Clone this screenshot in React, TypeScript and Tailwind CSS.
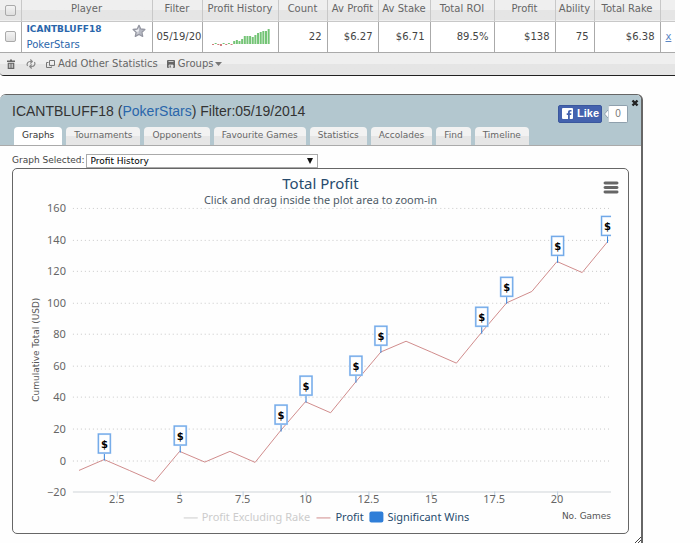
import { useState } from 'react'

const TABS = ['Graphs', 'Tournaments', 'Opponents', 'Favourite Games', 'Statistics', 'Accolades', 'Find', 'Timeline']

const PROFIT = [
  -6.6, 0.3, -6.6, -13.6, 5.5, -1.3, 5.5, -1.5, 18.4, 37, 30,
  49.6, 68.6, 75.4, 68.5, 61.5, 81, 99.8, 107, 126, 119, 138.4,
]
const WINS = [2, 5, 9, 10, 12, 13, 17, 18, 20, 22]
const Y_TICKS = [160, 140, 120, 100, 80, 60, 40, 20, 0, -20]
const X_TICKS = [2.5, 5, 7.5, 10, 12.5, 15, 17.5, 20]

// bar heights of the small history graph, negative ones are losses
const SPARK = [-1, 1, -1, -2, 1, -1, 1, -1, 3, 4, 3, 5, 8, 8, 8, 7, 9, 11, 12, 13, 13, 15]

const px = (n: number) => 40.9 + 25.2 * n
const py = (v: number) => 291.5 - 1.578 * v

function Sparkline() {
  return (
    <svg className="block w-[60px] h-5" viewBox="0 0 60 20">
      {SPARK.map((h, i) => (
        <rect
          key={i}
          x={1 + i * 2.65}
          y={h < 0 ? 17 : 17 - h}
          width={2}
          height={Math.abs(h)}
          fill={h < 0 ? '#d07c7c' : '#74c476'}
        />
      ))}
    </svg>
  )
}

function StarIcon() {
  return (
    <svg className="w-3.5 h-3.5 mt-0.5 shrink-0" viewBox="0 0 16 16">
      <path d="M8 1.500l2 4.200 4.700.6-3.400 3.200.9 4.600L8 11.900l-4.200 2.200.9-4.600L1.300 6.300 6 5.700z" fill="#c9cbd3" stroke="#9496a1" strokeWidth="1.500" strokeLinejoin="round" />
      <path d="M8 4v7.500l3.500 2-.5-4.300L14 6.600l-4.400-.5z" fill="#a9acb8" opacity=".6" />
      <path d="M7.400 4.500L6.400 6.600l-3 .4 2.300 2L8 8z" fill="#eff0f4" />
    </svg>
  )
}

function TrashIcon() {
  return (
    <svg className="w-3 h-3" viewBox="0 0 12 12" fill="#666">
      <path d="M2 2.500h3V1.500h2v1h3V4H2zM2.700 4.800h6.600V11H2.700z" />
      <path d="M4.400 5.800v4M6 5.800v4M7.600 5.800v4" stroke="#e6e6e6" strokeWidth=".8" />
    </svg>
  )
}

function RefreshIcon() {
  return (
    <svg className="w-3 h-3" viewBox="0 0 12 12" fill="none" stroke="#888" strokeWidth="1.200">
      <path d="M2.500 8C1.200 5.500 3 3.500 5 3.500H7M5.300 1.500l2 2-2 2M9.500 4C10.800 6.500 9 8.500 7 8.500H5M6.700 6.500l-2 2 2 2" />
    </svg>
  )
}

function AddIcon() {
  return (
    <svg className="w-3 h-3" viewBox="0 0 12 12" fill="none" stroke="#777">
      <path d="M4.500 2.500h5v5h-5zM3.500 4.500h-2v5h5v-1" />
    </svg>
  )
}

function DiskIcon() {
  return (
    <svg className="w-2.5 h-2.5" viewBox="0 0 10 10">
      <rect x="1" y="1" width="8" height="8" rx="1" fill="#666" />
      <path d="M2.500 2.500h5M3 6h4v2.500H3z" stroke="#e6e6e6" fill="#e6e6e6" strokeWidth=".8" />
      <rect x="3.600" y="6.500" width="1.200" height="2" fill="#666" />
    </svg>
  )
}

function Check({ label }: { label: string }) {
  return (
    <input
      type="checkbox"
      aria-label={label}
      className="block mx-auto appearance-none w-[11px] h-[11px] rounded-xs border border-[#aaa] bg-linear-to-b from-[#f4f4f4] to-[#dedede]"
    />
  )
}

function StatsTable() {
  const head = 'border-r border-[#c8c8c8] font-normal text-center pb-0.5'
  const cell = 'border-r border-[#aaa] text-right pr-[5px]'
  return (
    <section className="mr-[25px] border-b border-[#222] rounded-bl-sm overflow-hidden text-[10px] leading-3 text-[#666] bg-[#ebebeb]">
      <table className="w-full table-fixed border-collapse whitespace-nowrap">
        <colgroup>
          <col className="w-[21px]" />
          <col className="w-[131px]" />
          <col className="w-[50px]" />
          <col className="w-[76px]" />
          <col className="w-[49px]" />
          <col className="w-[51px]" />
          <col className="w-[52px]" />
          <col className="w-[64px]" />
          <col className="w-[61px]" />
          <col className="w-[39px]" />
          <col className="w-[66px]" />
          <col />
        </colgroup>
        <thead>
          <tr className="h-[21px] bg-linear-to-b from-[#efefef] from-50% to-[#e5e5e5] to-50% border-b border-[#c8c8c8]">
            <th className="border-r border-[#c8c8c8]"><Check label="Select all" /></th>
            {['Player', 'Filter', 'Profit History', 'Count', 'Av Profit', 'Av Stake', 'Total ROI', 'Profit', 'Ability', 'Total Rake'].map(h => (
              <th key={h} className={head}>{h}</th>
            ))}
            <th />
          </tr>
        </thead>
        <tbody>
          <tr className="h-[31px] bg-white border-b border-[#aaa] text-[#444]">
            <td className="border-r border-[#aaa]"><Check label="Select ICANTBLUFF18" /></td>
            <td className="border-r border-[#aaa] pl-[5px] pr-1.5">
              <div className="flex justify-between">
                <div className="text-[#2a66ab] leading-[15px]">
                  <a href="#player" className="block text-[9px] font-bold">ICANTBLUFF18</a>
                  <a href="#network" className="block">PokerStars</a>
                </div>
                <StarIcon />
              </div>
            </td>
            <td className="border-r border-[#aaa] pl-1">05/19/20</td>
            <td className="border-r border-[#aaa] pl-2"><Sparkline /></td>
            <td className={cell}>22</td>
            <td className={cell}>$6.27</td>
            <td className={cell}>$6.71</td>
            <td className={cell}>89.5%</td>
            <td className={cell}>$138</td>
            <td className={cell}>75</td>
            <td className={cell}>$6.38</td>
            <td className="pl-[5px]"><a href="#remove" className="text-[#5b86c4] underline">x</a></td>
          </tr>
        </tbody>
      </table>
      <div className="flex items-center h-[22px] px-[5px] bg-linear-to-b from-[#efefef] from-50% to-[#e5e5e5] to-50%">
        <button aria-label="Delete"><TrashIcon /></button>
        <button aria-label="Refresh" className="ml-2"><RefreshIcon /></button>
        <button className="ml-2 flex items-center gap-px"><AddIcon />Add Other Statistics</button>
        <button className="ml-2 flex items-center gap-0.5">
          <DiskIcon />
          Groups
          <svg className="w-2 h-2" viewBox="0 0 8 8"><path d="M0 2h7L3.500 6z" fill="#777" /></svg>
        </button>
      </div>
    </section>
  )
}

function Flag({ n }: { n: number }) {
  const x = Math.round(px(n))
  const y = Math.round(py(PROFIT[n - 1])) + 1
  return (
    <g>
      <path d={`M${x + 0.5} ${y}v-8`} stroke="#2f7ed8" />
      <rect x={x - 5.5} y={y - 26.5} width="12" height="19" fill="#fff" stroke="#bcd7f6" strokeWidth="2" />
      <rect x={x - 5.5} y={y - 26.5} width="12" height="19" fill="none" stroke="#6ba5e7" />
      <text x={x + 0.5} y={y - 13} textAnchor="middle" fontSize="10" fontWeight="bold" fill="#000">$</text>
    </g>
  )
}

function ProfitChart() {
  const line = PROFIT.map((v, i) => `${px(i + 1)},${py(v)}`).join(' ')
  return (
    <svg className="block w-full h-auto font-['Noto_Sans',sans-serif]" viewBox="0 0 616 365" role="img" aria-label="Total Profit">
      <text x="308" y="20" textAnchor="middle" fontSize="15" fill="#274b6d">Total Profit</text>
      <text x="308" y="35" textAnchor="middle" fontSize="11" fill="#4d5a66">Click and drag inside the plot area to zoom-in</text>

      <path d="M593 14h12M593 18.500h12M593 23h12" stroke="#666" strokeWidth="3" strokeLinecap="round" />

      {Y_TICKS.map(t => {
        const y = Math.round(py(t)) + 0.5
        return (
          <g key={t}>
            <path d={`M60 ${y}H599`} stroke={t === -20 ? '#d0d4d8' : '#c8c8c8'} strokeDasharray={t === -20 ? undefined : '1 3'} />
            <text x="53" y={y + 4} textAnchor="end" fontSize="11" fill="#666">{String(t).replace('-', '−')}</text>
          </g>
        )
      })}
      {X_TICKS.map(t => (
        <g key={t}>
          <path d={`M${Math.round(px(t)) + 0.5} 323v5`} stroke="#c0d0e0" />
          <text x={Math.round(px(t))} y="335" textAnchor="middle" fontSize="11" fill="#666">{t}</text>
        </g>
      ))}

      <g className="font-['DejaVu_Sans',sans-serif]" fontSize="9" fill="#555">
        <text transform="translate(26 181) rotate(-90)" textAnchor="middle">Cumulative Total (USD)</text>
        <text x="599" y="351" textAnchor="end">No. Games</text>
      </g>

      <clipPath id="plot"><rect x="60" y="36" width="539" height="290" /></clipPath>
      <g clipPath="url(#plot)" className="font-['DejaVu_Sans',sans-serif]">
        <polyline points={line} fill="none" stroke="#d08c8c" strokeWidth="1" />
        {WINS.map(n => <Flag key={n} n={n} />)}
      </g>

      <g fontSize="11" fill="#274b6d">
        <path d="M171 349.500h14" stroke="#ccc" />
        <text x="189" y="353" fill="#ccc">Profit Excluding Rake</text>
        <path d="M304 349.500h14" stroke="#d08c8c" />
        <text x="323" y="353">Profit</text>
        <rect x="357" y="343" width="14" height="11" rx="2" fill="#2f7ed8" />
        <text x="375" y="353">Significant Wins</text>
      </g>
    </svg>
  )
}

function PlayerPanel() {
  const [tab, setTab] = useState('Graphs')
  return (
    <section className="relative flex-1 mr-[57px] mt-[18px] border-t border-r-2 border-[#666] rounded-t-md overflow-hidden">
      <header className="bg-[#b3c7cf] border-b border-[#aaa] h-[51px] flex flex-col justify-between">
        <div className="flex justify-between items-start pl-3 pr-0.5 h-8">
          <h1 className="font-['Liberation_Sans',sans-serif] text-sm leading-8 text-[#333]">
            ICANTBLUFF18 (<a href="#network" className="text-[#2a66ab]">PokerStars</a>) Filter:05/19/2014
          </h1>
          <div className="flex items-start">
            <button className="mt-[10px] flex items-center gap-1 h-[18px] w-11 pl-[3px] rounded-xs bg-[#4462ae] border border-[#3a579d] text-white font-['Liberation_Sans',sans-serif] text-[11px] font-bold">
              <svg className="w-[11px] h-[11px] shrink-0" viewBox="0 0 11 11">
                <rect width="11" height="11" rx="1" fill="#fff" />
                <path d="M6 11V7H4.700V5.300H6V4.200C6 2.700 6.900 2 8.200 2H9.500v1.600h-.8c-.7 0-.9.3-.9.9v.8h1.600L9.200 7H7.800v4z" fill="#4462ae" />
              </svg>
              Like
            </button>
            <svg className="mt-[15px] ml-[2px] w-1 h-2" viewBox="0 0 4 8"><path d="M4 0L.5 4 4 8" fill="#fff" stroke="#8fa0ad" /></svg>
            <span className="mt-[10px] w-5 h-[18px] rounded-xs border border-[#8fa0ad] border-l-[#c4cfd6] bg-white text-center text-[10px] leading-4 text-[#777] font-['Liberation_Sans',sans-serif]">0</span>
            <button aria-label="Close" className="mt-1 ml-[3px]">
              <svg className="w-2 h-2" viewBox="0 0 8 8"><path d="M1.500 1.500l5 5M6.500 1.500l-5 5" stroke="#222" strokeWidth="2.400" /></svg>
            </button>
          </div>
        </div>
        <nav className="flex gap-1 pl-[14px]">
          {TABS.map(t => (
            <button
              key={t}
              onClick={() => setTab(t)}
              className={`h-[18px] px-2 rounded-t-sm text-[9px] whitespace-nowrap ${t === tab ? 'bg-white text-[#333]' : 'bg-linear-to-b from-[#f2f2f2] from-50% to-[#e6e6e6] to-50% text-[#666]'}`}
            >
              {t}
            </button>
          ))}
        </nav>
      </header>

      <div className="px-3 pt-2">
        <div className="flex items-center text-[9px] text-[#444]">
          <label htmlFor="graph">Graph Selected:</label>
          <div className="relative ml-px w-[232px]">
            <select id="graph" className="block w-full h-[14px] pl-1 appearance-none border border-[#aaa] bg-white text-black">
              <option>Profit History</option>
            </select>
            <svg className="absolute right-1 top-1 w-2 h-1.5 pointer-events-none" viewBox="0 0 8 6"><path d="M1 0h6L4 6z" fill="#111" /></svg>
          </div>
        </div>
        <div className="border border-[#666] rounded-[5px]">
          <ProfitChart />
        </div>
      </div>

      <svg className="absolute right-0 bottom-0 w-1.5 h-1.5" viewBox="0 0 6 6"><path d="M0 6l6-6M3 6l3-3" stroke="#444" /></svg>
    </section>
  )
}

export default function App() {
  return (
    <main className="flex flex-col min-h-screen bg-[#fefefe] font-['DejaVu_Sans',sans-serif]">
      <StatsTable />
      <PlayerPanel />
    </main>
  )
}
